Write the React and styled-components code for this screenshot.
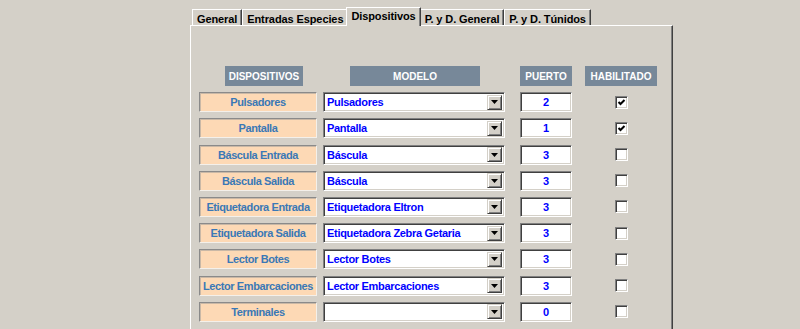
import styled, {createGlobalStyle} from 'styled-components'

const rows = [
  {label: 'Pulsadores', model: 'Pulsadores', port: '2', on: true},
  {label: 'Pantalla', model: 'Pantalla', port: '1', on: true},
  {label: 'Báscula Entrada', model: 'Báscula', port: '3', on: false},
  {label: 'Báscula Salida', model: 'Báscula', port: '3', on: false},
  {label: 'Etiquetadora Entrada', model: 'Etiquetadora Eltron', port: '3', on: false},
  {label: 'Etiquetadora Salida', model: 'Etiquetadora Zebra Getaria', port: '3', on: false},
  {label: 'Lector Botes', model: 'Lector Botes', port: '3', on: false},
  {label: 'Lector Embarcaciones', model: 'Lector Embarcaciones', port: '3', on: false},
  {label: 'Terminales', model: '', port: '0', on: false},
]

const tabs = ['General', 'Entradas Especies', 'Dispositivos', 'P. y D. General', 'P. y D. Túnidos']

const App = () => {
  return (
    <Page>
      <GlobalStyle />
      <TabStrip>
        {tabs.map(t => (
          <Tab key={t} $active={t === 'Dispositivos'}>{t}</Tab>
        ))}
      </TabStrip>
      <Panel>
        <Grid>
          <Header $w={78} $ml={26}>DISPOSITIVOS</Header>
          <Header $w={130} $ml={27}>MODELO</Header>
          <Header $w={52}>PUERTO</Header>
          <Header $w={72}>HABILITADO</Header>
          {rows.map(r => (
            <Row key={r.label}>
              <Label>{r.label}</Label>
              <Combo>
                <ComboText>{r.model}</ComboText>
                <ComboButton>
                  <svg width='7' height='4' viewBox='0 0 7 4'>
                    <polygon points='0,0 7,0 3.5,4' fill='#000' />
                  </svg>
                </ComboButton>
              </Combo>
              <Port>{r.port}</Port>
              <CheckCell>
                <Check>
                  {r.on && (
                    <svg width='9' height='9' viewBox='0 0 9 9'>
                      <polyline points='1.5,4 3.5,6 7.5,2' fill='none' stroke='#000' strokeWidth='2' />
                    </svg>
                  )}
                </Check>
              </CheckCell>
            </Row>
          ))}
        </Grid>
      </Panel>
    </Page>
  )
}

const GlobalStyle = createGlobalStyle`
  html, body {
    margin: 0;
    background: #d4d0c8;
    overflow: hidden;
  }
  body {
    font-family: "Liberation Sans", Arial, sans-serif;
    font-size: 11px;
  }
`

const Page = styled.div`
  width: 800px;
  height: 329px;
  padding: 7px 0 0 190px;
  box-sizing: border-box;
`

const TabStrip = styled.div`
  display: flex;
  align-items: flex-end;
  height: 18px;
  padding-left: 2px;
`

const Tab = styled.div`
  position: relative;
  z-index: ${p => p.$active ? 2 : 0};
  height: ${p => p.$active ? '19px' : '16px'};
  margin: ${p => p.$active ? '0 -1px -1px -2px' : '0'};
  padding: 0 4px;
  padding-top: ${p => p.$active ? '2px' : '3px'};
  box-sizing: border-box;
  background: #d4d0c8;
  border-top: 1px solid #fff;
  border-left: 1px solid #fff;
  border-right: 1px solid #404040;
  box-shadow: inset -1px 0 0 #808080;
  font-weight: bold;
  font-size: 11px;
  letter-spacing: -0.1px;
  color: #000;
  white-space: nowrap;
`

const Panel = styled.div`
  width: 483px;
  height: 320px;
  box-sizing: border-box;
  border-top: 1px solid #fff;
  border-left: 1px solid #fff;
  border-right: 1px solid #404040;
  box-shadow: inset -1px 0 0 #808080;
  padding: 40px 0 0 8px;
`

const Grid = styled.div`
  display: grid;
  grid-template-columns: 124px 197px 65px 72px;
  grid-auto-rows: 20px;
  row-gap: 6.2px;
`

const Row = styled.div`
  display: contents;
`

const Header = styled.div`
  width: ${p => p.$w}px;
  margin-left: ${p => p.$ml || 0}px;
  height: 20px;
  background: #778899;
  color: #fff;
  font-weight: bold;
  font-size: 10px;
  display: flex;
  align-items: center;
  justify-content: center;
`

const Label = styled.div`
  width: 118px;
  height: 20px;
  box-sizing: border-box;
  background: #fdd9b5;
  border: 1px solid;
  border-color: #8a8a8a #f4f0ea #f4f0ea #8a8a8a;
  box-shadow: inset 1px 1px 0 #c9b8a6;
  color: #3a78b6;
  font-weight: bold;
  letter-spacing: -0.4px;
  display: flex;
  align-items: center;
  justify-content: center;
  white-space: nowrap;
`

const Combo = styled.div`
  width: 182px;
  height: 20px;
  box-sizing: border-box;
  background: #fff;
  border: 1px solid;
  border-color: #808080 #fff #fff #808080;
  box-shadow: inset 1px 1px 0 #404040, inset -1px -1px 0 #d4d0c8;
  display: flex;
  align-items: center;
  padding: 2px 2px 2px 3px;
`

const ComboText = styled.div`
  flex: 1;
  color: #0000ff;
  font-weight: bold;
  letter-spacing: -0.3px;
  white-space: nowrap;
  overflow: hidden;
`

const ComboButton = styled.div`
  width: 15px;
  height: 15px;
  box-sizing: border-box;
  background: #d4d0c8;
  border: 1px solid;
  border-color: #d4d0c8 #404040 #404040 #d4d0c8;
  box-shadow: inset 1px 1px 0 #fff, inset -1px -1px 0 #808080;
  display: flex;
  align-items: center;
  justify-content: center;
`

const Port = styled.div`
  width: 52px;
  height: 20px;
  box-sizing: border-box;
  background: #fff;
  border: 1px solid;
  border-color: #808080 #fff #fff #808080;
  box-shadow: inset 1px 1px 0 #404040, inset -1px -1px 0 #d4d0c8;
  color: #0000ff;
  font-weight: bold;
  display: flex;
  align-items: center;
  justify-content: center;
`

const CheckCell = styled.div`
  width: 72px;
  display: flex;
  align-items: center;
  justify-content: center;
`

const Check = styled.div`
  width: 13px;
  height: 13px;
  box-sizing: border-box;
  background: #fff;
  border: 1px solid;
  border-color: #808080 #fff #fff #808080;
  box-shadow: inset 1px 1px 0 #404040, inset -1px -1px 0 #d4d0c8;
  display: flex;
  align-items: center;
  justify-content: center;
`

export default App
